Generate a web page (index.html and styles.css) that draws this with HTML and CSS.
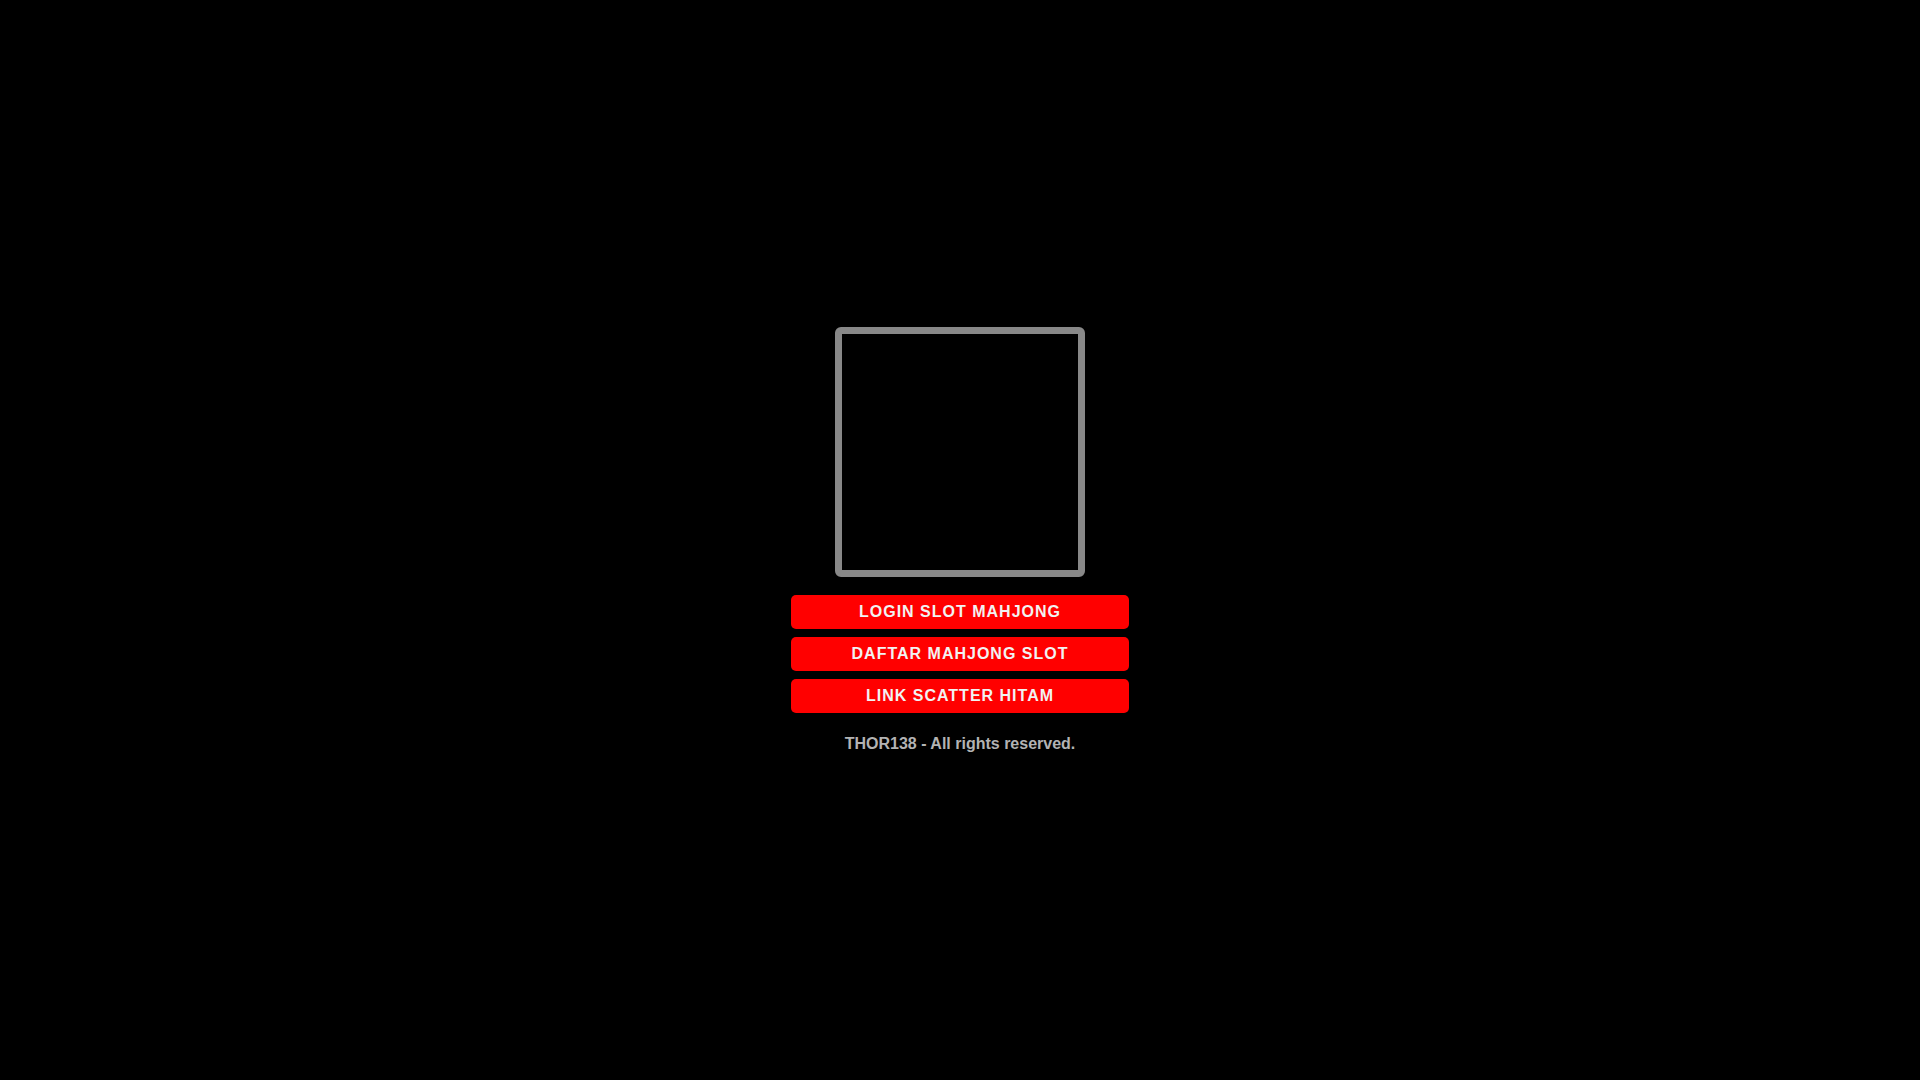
FILE: index.html
```html
<!DOCTYPE html>
<html lang="id">
<head>
<meta charset="utf-8">
<title>THOR138</title>
<link rel="stylesheet" href="styles.css">
</head>
<body>
<main class="wrap">
  <div class="frame"></div>
  <nav class="buttons">
    <a class="btn" href="#">LOGIN SLOT MAHJONG</a>
    <a class="btn" href="#">DAFTAR MAHJONG SLOT</a>
    <a class="btn" href="#">LINK SCATTER HITAM</a>
  </nav>
  <p class="footer">THOR138 - All rights reserved.</p>
</main>
</body>
</html>
```
FILE: styles.css
```css
html, body {
  margin: 0;
  padding: 0;
  height: 100%;
  background: #000;
}
body {
  font-family: "Liberation Sans", Arial, sans-serif;
}
.wrap {
  min-height: 100vh;
  display: flex;
  flex-direction: column;
  align-items: center;
  justify-content: center;
}
.frame {
  width: 236px;
  height: 236px;
  border: 7px solid #888;
  border-radius: 6px;
  margin-top: 4px;
}
.buttons {
  display: flex;
  flex-direction: column;
  gap: 8px;
  margin-top: 18px;
  width: 338px;
}
.btn {
  display: block;
  height: 34px;
  line-height: 34px;
  background: #ff0000;
  color: #f2f2f2;
  text-align: center;
  text-decoration: none;
  font-weight: bold;
  font-size: 16px;
  letter-spacing: 1px;
  border-radius: 5px;
}
.footer {
  margin: 19px 0 2px;
  color: #b3b3b3;
  font-weight: bold;
  font-size: 16px;
  line-height: 24px;
}
```
